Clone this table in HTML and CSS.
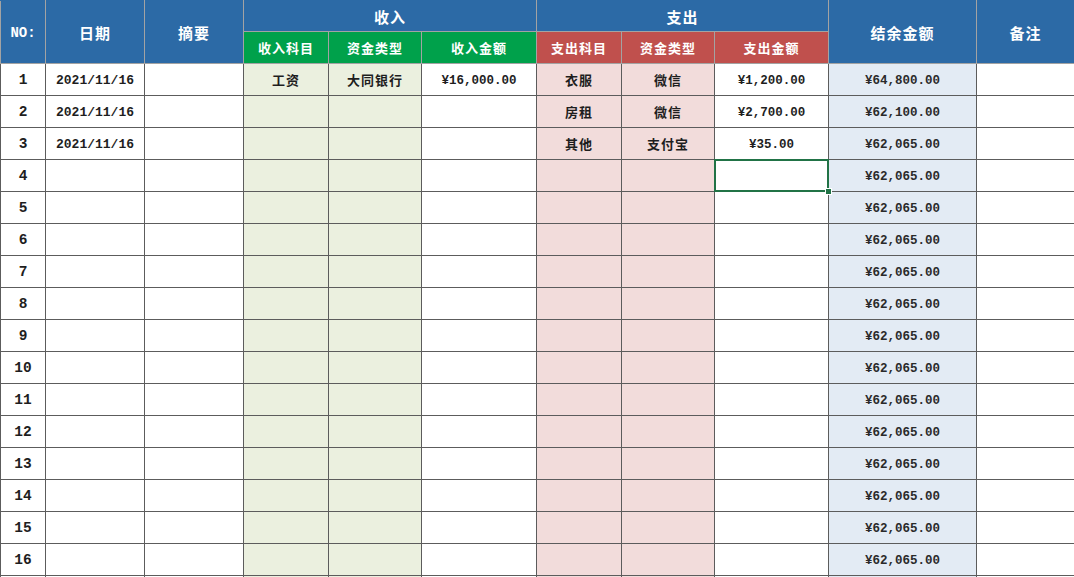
FILE: index.html
```html
<!DOCTYPE html>
<html lang="zh-CN">
<head>
<meta charset="utf-8">
<title>收支记账表</title>
<link rel="stylesheet" href="styles.css">
</head>
<body>
<table class="sheet">
  <colgroup>
    <col class="c-no"><col class="c-date"><col class="c-memo">
    <col class="c-isub"><col class="c-itype"><col class="c-iamt">
    <col class="c-esub"><col class="c-etype"><col class="c-eamt">
    <col class="c-bal"><col class="c-note">
  </colgroup>
  <thead>
    <tr class="hr1">
      <th rowspan="2" class="blue num">NO:</th>
      <th rowspan="2" class="blue big">日期</th>
      <th rowspan="2" class="blue big">摘要</th>
      <th colspan="3" class="blue big">收入</th>
      <th colspan="3" class="blue big">支出</th>
      <th rowspan="2" class="blue big">结余金额</th>
      <th rowspan="2" class="blue big">备注</th>
    </tr>
    <tr class="hr2">
      <th class="green">收入科目</th>
      <th class="green">资金类型</th>
      <th class="green">收入金额</th>
      <th class="red">支出科目</th>
      <th class="red">资金类型</th>
      <th class="red">支出金额</th>
    </tr>
  </thead>
  <tbody>
    <tr><td class="no">1</td><td class="date">2021/11/16</td><td></td><td class="inc">工资</td><td class="inc">大同银行</td><td class="money">¥16,000.00</td><td class="exp">衣服</td><td class="exp">微信</td><td class="money">¥1,200.00</td><td class="bal money">¥64,800.00</td><td></td></tr>
    <tr><td class="no">2</td><td class="date">2021/11/16</td><td></td><td class="inc"></td><td class="inc"></td><td></td><td class="exp">房租</td><td class="exp">微信</td><td class="money">¥2,700.00</td><td class="bal money">¥62,100.00</td><td></td></tr>
    <tr><td class="no">3</td><td class="date">2021/11/16</td><td></td><td class="inc"></td><td class="inc"></td><td></td><td class="exp">其他</td><td class="exp">支付宝</td><td class="money">¥35.00</td><td class="bal money">¥62,065.00</td><td></td></tr>
    <tr><td class="no">4</td><td></td><td></td><td class="inc"></td><td class="inc"></td><td></td><td class="exp"></td><td class="exp"></td><td class="selected"><div class="sel-box"><span class="sel-handle"></span></div></td><td class="bal money">¥62,065.00</td><td></td></tr>
    <tr><td class="no">5</td><td></td><td></td><td class="inc"></td><td class="inc"></td><td></td><td class="exp"></td><td class="exp"></td><td></td><td class="bal money">¥62,065.00</td><td></td></tr>
    <tr><td class="no">6</td><td></td><td></td><td class="inc"></td><td class="inc"></td><td></td><td class="exp"></td><td class="exp"></td><td></td><td class="bal money">¥62,065.00</td><td></td></tr>
    <tr><td class="no">7</td><td></td><td></td><td class="inc"></td><td class="inc"></td><td></td><td class="exp"></td><td class="exp"></td><td></td><td class="bal money">¥62,065.00</td><td></td></tr>
    <tr><td class="no">8</td><td></td><td></td><td class="inc"></td><td class="inc"></td><td></td><td class="exp"></td><td class="exp"></td><td></td><td class="bal money">¥62,065.00</td><td></td></tr>
    <tr><td class="no">9</td><td></td><td></td><td class="inc"></td><td class="inc"></td><td></td><td class="exp"></td><td class="exp"></td><td></td><td class="bal money">¥62,065.00</td><td></td></tr>
    <tr><td class="no">10</td><td></td><td></td><td class="inc"></td><td class="inc"></td><td></td><td class="exp"></td><td class="exp"></td><td></td><td class="bal money">¥62,065.00</td><td></td></tr>
    <tr><td class="no">11</td><td></td><td></td><td class="inc"></td><td class="inc"></td><td></td><td class="exp"></td><td class="exp"></td><td></td><td class="bal money">¥62,065.00</td><td></td></tr>
    <tr><td class="no">12</td><td></td><td></td><td class="inc"></td><td class="inc"></td><td></td><td class="exp"></td><td class="exp"></td><td></td><td class="bal money">¥62,065.00</td><td></td></tr>
    <tr><td class="no">13</td><td></td><td></td><td class="inc"></td><td class="inc"></td><td></td><td class="exp"></td><td class="exp"></td><td></td><td class="bal money">¥62,065.00</td><td></td></tr>
    <tr><td class="no">14</td><td></td><td></td><td class="inc"></td><td class="inc"></td><td></td><td class="exp"></td><td class="exp"></td><td></td><td class="bal money">¥62,065.00</td><td></td></tr>
    <tr><td class="no">15</td><td></td><td></td><td class="inc"></td><td class="inc"></td><td></td><td class="exp"></td><td class="exp"></td><td></td><td class="bal money">¥62,065.00</td><td></td></tr>
    <tr><td class="no">16</td><td></td><td></td><td class="inc"></td><td class="inc"></td><td></td><td class="exp"></td><td class="exp"></td><td></td><td class="bal money">¥62,065.00</td><td></td></tr>
    <tr><td></td><td></td><td></td><td class="inc"></td><td class="inc"></td><td></td><td class="exp"></td><td class="exp"></td><td></td><td class="bal"></td><td></td></tr>
  </tbody>
</table>
</body>
</html>
```

FILE: styles.css
```css
html, body {
  margin: 0;
  padding: 0;
  background: #ffffff;
  overflow: hidden;
}

.sheet {
  border-collapse: collapse;
  table-layout: fixed;
  width: 1074px;
  font-family: "Noto Sans CJK SC", "Liberation Sans", sans-serif;
  color: #1e1e1e;
}

.c-no { width: 45px; }
.c-date { width: 99px; }
.c-memo { width: 99px; }
.c-isub { width: 85px; }
.c-itype { width: 93px; }
.c-iamt { width: 115px; }
.c-esub { width: 85px; }
.c-etype { width: 93px; }
.c-eamt { width: 114px; }
.c-bal { width: 148px; }
.c-note { width: 98px; }

.sheet th,
.sheet td {
  padding: 0;
  border: 1px solid #5c5c5c;
  text-align: center;
  vertical-align: middle;
  white-space: nowrap;
  overflow: hidden;
  font-weight: bold;
}

.sheet th {
  color: #ffffff;
  border-color: #a3a3a3;
  font-size: 13px;
  letter-spacing: 1px;
}

.sheet thead tr:first-child th {
  border-top-color: #2c6aa6;
}

.sheet .hr1 { height: 31px; }
.sheet .hr2 { height: 32px; }
.sheet tbody tr { height: 32px; }

.sheet .blue { background: #2c6aa6; }
.sheet .green { background: #00a14b; }
.sheet .red { background: #c0504d; }

.sheet .big {
  font-size: 15px;
  letter-spacing: 1px;
}

.sheet .num {
  font-family: "Liberation Mono", monospace;
  font-size: 14px;
  letter-spacing: 0;
  padding-top: 2px;
}

.sheet td {
  font-size: 13px;
  letter-spacing: 1px;
}

.sheet .no {
  font-family: "Liberation Mono", monospace;
  font-size: 14.5px;
  letter-spacing: 0;
  padding-top: 1px;
}

.sheet .date {
  font-family: "Liberation Mono", monospace;
  font-size: 13px;
  letter-spacing: 0;
  padding-top: 1px;
}

.sheet .money {
  font-family: "Liberation Mono", monospace;
  font-size: 12.5px;
  letter-spacing: 0;
  padding-top: 3px;
}

.sheet .inc { background: #ebf0df; }
.sheet .exp { background: #f2dcdb; }
.sheet .bal { background: #e3ebf4; color: #2a2a2a; }

.sheet .selected {
  position: relative;
  overflow: visible;
}

.sel-box {
  position: absolute;
  top: -1px;
  left: -1px;
  right: -1px;
  bottom: -1px;
  border: 2px solid #217346;
}

.sel-handle {
  position: absolute;
  right: -5px;
  bottom: -5px;
  width: 5px;
  height: 5px;
  background: #217346;
  border: 1px solid #ffffff;
  z-index: 2;
}
```
